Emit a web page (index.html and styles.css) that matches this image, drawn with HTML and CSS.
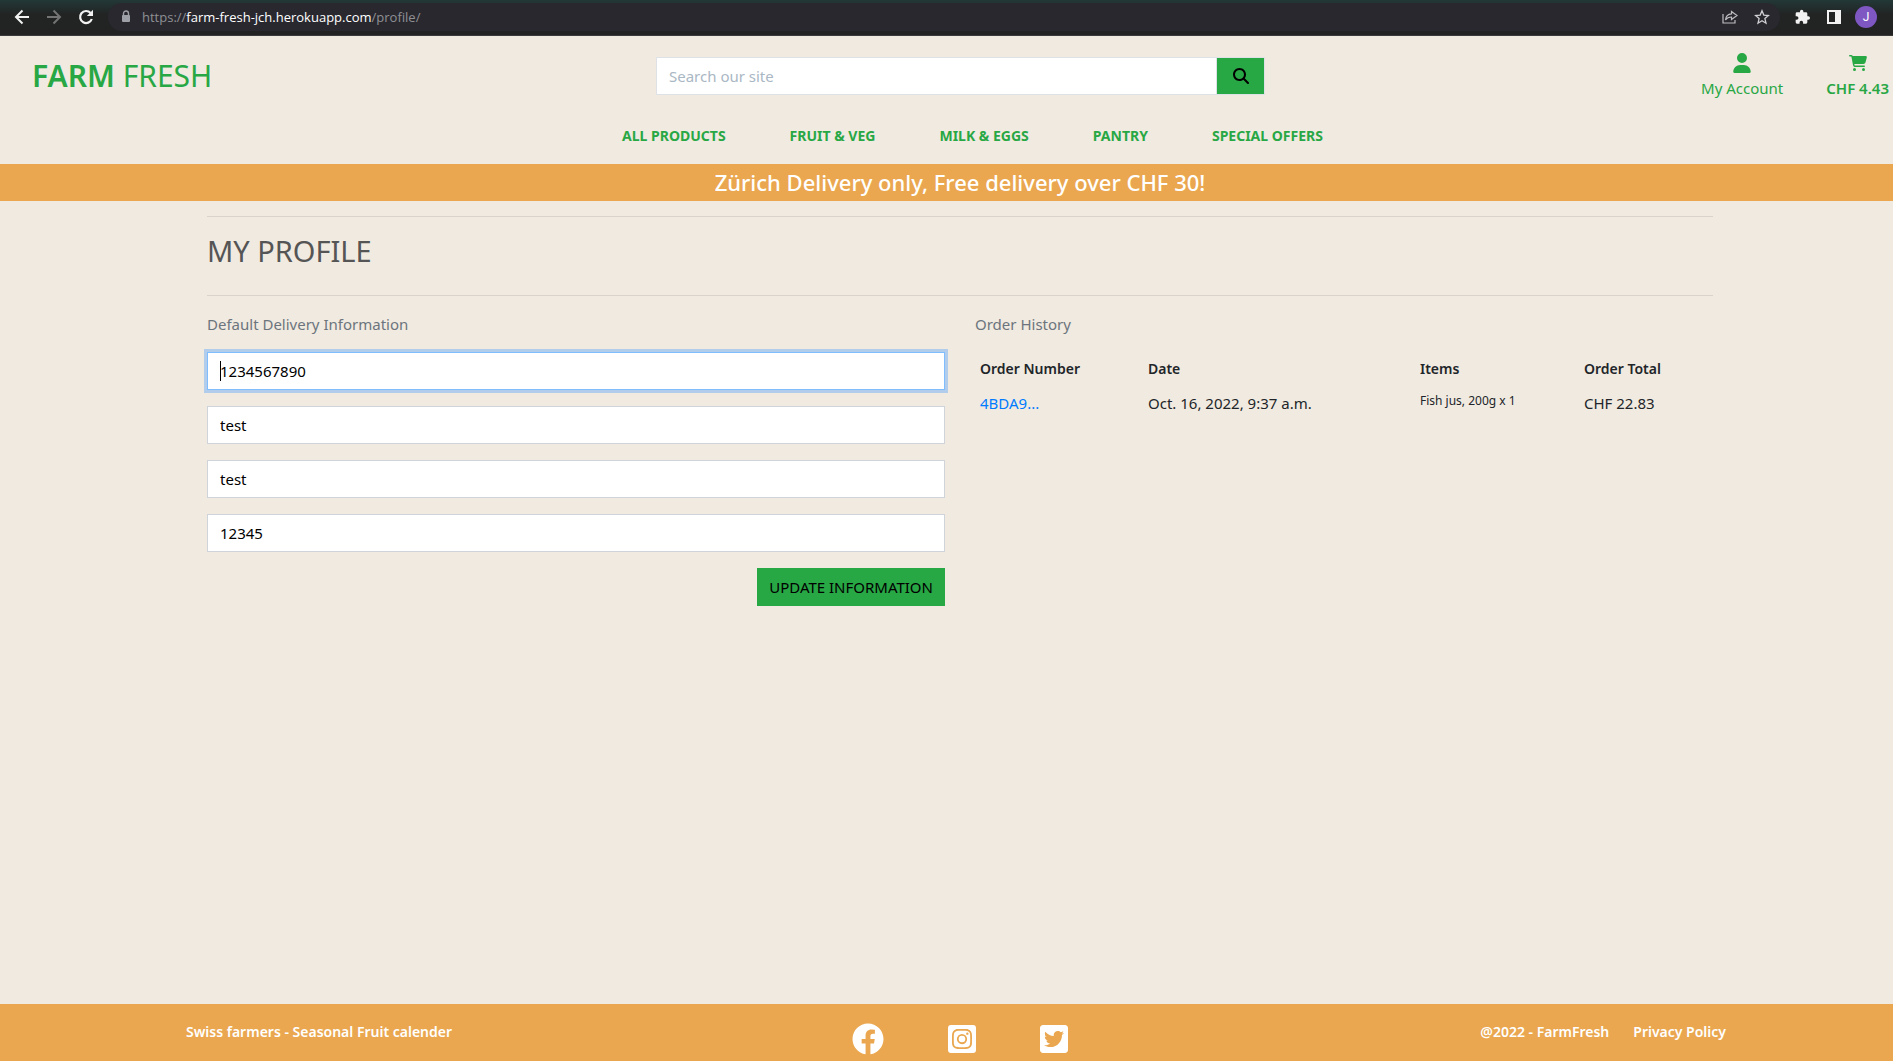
FILE: index.html
```html
<!DOCTYPE html>
<html lang="en">
<head>
<meta charset="utf-8">
<meta name="viewport" content="width=device-width, initial-scale=1">
<title>Farm Fresh - My Profile</title>
<link rel="stylesheet" href="styles.css">
</head>
<body>
<div class="browser">
  <button class="tool" type="button" aria-label="Back"><svg width="16" height="16" viewBox="0 0 16 16" fill="none" stroke="#f2f2f2" stroke-width="2"><path d="M15 8H2M8.500 1.500 2 8l6.500 6.500"/></svg></button>
  <button class="tool" type="button" aria-label="Forward"><svg width="16" height="16" viewBox="0 0 16 16" fill="none" stroke="#747474" stroke-width="2"><path d="M1 8h13M7.500 1.500 14 8l-6.500 6.500"/></svg></button>
  <button class="tool" type="button" aria-label="Reload"><svg width="16" height="16" viewBox="0 0 16 16"><path d="M12.600 4A6 6 0 1 0 13.800 10" fill="none" stroke="#f2f2f2" stroke-width="2.200"/><path d="M15 .8V7H8.800z" fill="#f2f2f2"/></svg></button>
  <div class="address">
    <svg class="lock" width="10" height="14" viewBox="0 0 10 14"><path d="M2.500 6V3.500a2.500 2.500 0 0 1 5 0V6" fill="none" stroke="#9da0a6" stroke-width="1.400"/><rect x="1" y="5" width="8" height="7" rx="1" fill="#9da0a6"/></svg>
    <span class="url">https://<span class="host">farm-fresh-jch.herokuapp.com</span>/profile/</span>
    <button class="tool" type="button" aria-label="Share"><svg width="16" height="16" viewBox="0 0 16 16" fill="none" stroke="#bdbdc0" stroke-width="1.200"><path d="M1 5v9h12v-3M9.500 2.500 15 6.500l-5.500 4V8C6.500 8 4.800 9 3.500 11 3.800 7.500 6 5.200 9.500 4.900z"/></svg></button>
    <button class="tool" type="button" aria-label="Bookmark"><svg width="16" height="16" viewBox="0 0 16 16" fill="none" stroke="#d0d0d3" stroke-width="1.300"><path d="m8 1.800 1.800 4.300 4.700.4-3.600 3.100 1.100 4.600L8 11.700l-4 2.500 1.100-4.600L1.500 6.500l4.700-.4z"/></svg></button>
  </div>
  <button class="tool" type="button" aria-label="Extensions"><svg width="16" height="16" viewBox="0 0 24 24" fill="#f2f2f2"><path d="M21.500 11H20V7a2 2 0 0 0-2-2h-4V3.500a2.500 2.500 0 0 0-5 0V5H4.500a2 2 0 0 0-2 2v3.800H4a2.700 2.700 0 0 1 0 5.400H2.500V20a2 2 0 0 0 2 2h3.800v-1.500a2.700 2.700 0 0 1 5.400 0V22H18a2 2 0 0 0 2-2v-4h1.500a2.500 2.500 0 0 0 0-5z"/></svg></button>
  <button class="tool" type="button" aria-label="Side panel"><svg width="16" height="16" viewBox="0 0 16 16"><path d="M1 1h14v14H1zM3 3v10h6V3z" fill="#f2f2f2" fill-rule="evenodd"/></svg></button>
  <button class="avatar" type="button">J</button>
</div>

<header class="header">
  <div class="topbar">
    <a class="logo" href="#"><strong>FARM</strong> FRESH</a>
    <form class="search">
      <input class="search-box" type="text" aria-label="Search our site" placeholder="Search our site">
      <button class="search-btn" type="button" aria-label="Search"><svg width="16" height="16" viewBox="0 0 512 512"><path d="M416 208c0 45.900-14.900 88.300-40 122.700L502.600 457.400c12.500 12.500 12.500 32.800 0 45.300s-32.800 12.500-45.300 0L330.700 376c-34.400 25.200-76.800 40-122.700 40C93.100 416 0 322.900 0 208S93.100 0 208 0S416 93.100 416 208zM208 352a144 144 0 1 0 0-288 144 144 0 1 0 0 288z"/></svg></button>
    </form>
    <div class="account">
      <a class="account-link" href="#"><svg width="18" height="20" viewBox="0 0 448 512" fill="currentColor"><path d="M224 256A128 128 0 1 0 224 0a128 128 0 1 0 0 256zm-45.700 48C79.800 304 0 383.800 0 482.300 0 498.700 13.300 512 29.700 512H418.300c16.400 0 29.700-13.300 29.700-29.700 0-98.500-79.800-178.300-178.300-178.300z"/></svg>My Account</a>
      <a class="account-link total" href="#"><svg width="18" height="20" viewBox="0 0 576 512" fill="currentColor"><path d="M0 24C0 10.700 10.700 0 24 0H69.500c22 0 41.500 12.800 50.600 32h411c26.300 0 45.500 25 38.600 50.400l-41 152.300c-8.500 31.400-37 53.300-69.500 53.300H170.700l5.400 28.500c2.200 11.300 12.100 19.500 23.600 19.500H488c13.300 0 24 10.700 24 24s-10.700 24-24 24H199.700c-34.600 0-64.300-24.600-70.700-58.500L77.400 54.500c-.7-3.800-4-6.500-7.900-6.500H24C10.700 48 0 37.300 0 24zM128 464a48 48 0 1 1 96 0 48 48 0 1 1-96 0zm336-48a48 48 0 1 1 0 96 48 48 0 1 1 0-96z"/></svg>CHF 4.43</a>
    </div>
  </div>
  <nav class="nav">
    <a href="#">ALL PRODUCTS</a>
    <a href="#">FRUIT &amp; VEG</a>
    <a href="#">MILK &amp; EGGS</a>
    <a href="#">PANTRY</a>
    <a href="#">SPECIAL OFFERS</a>
  </nav>
</header>

<p class="banner">Zürich Delivery only, Free delivery over CHF 30!</p>

<main class="main">
  <h1 class="title">MY PROFILE</h1>
  <div class="columns">
    <section>
      <h2 class="subtitle">Default Delivery Information</h2>
      <form class="form">
        <div class="field active"><input type="text" aria-label="Phone number" value="1234567890"></div>
        <div class="field"><input type="text" aria-label="Street address" value="test"></div>
        <div class="field"><input type="text" aria-label="Town or city" value="test"></div>
        <div class="field"><input type="text" aria-label="Postal code" value="12345"></div>
        <button class="update" type="button">UPDATE INFORMATION</button>
      </form>
    </section>
    <section>
      <h2 class="subtitle">Order History</h2>
      <table class="orders">
        <thead><tr><th class="c-number">Order Number</th><th class="c-date">Date</th><th class="c-items">Items</th><th>Order Total</th></tr></thead>
        <tbody><tr><td><a href="#">4BDA9...</a></td><td>Oct. 16, 2022, 9:37 a.m.</td><td class="items">Fish jus, 200g x 1</td><td>CHF 22.83</td></tr></tbody>
      </table>
    </section>
  </div>
</main>

<footer class="footer">
  <a href="#">Swiss farmers - Seasonal Fruit calender</a>
  <div class="social">
    <a href="#" aria-label="Facebook"><svg width="32" height="32" viewBox="0 0 512 512" fill="currentColor"><path d="M504 256C504 119 393 8 256 8S8 119 8 256c0 123.780 90.690 226.380 209.250 245V327.690h-63V256h63v-54.640c0-62.150 37-96.480 93.670-96.480 27.140 0 55.520 4.840 55.520 4.840v61h-31.280c-30.800 0-40.410 19.120-40.410 38.730V256h68.780l-11 71.690h-57.780V501C413.310 482.380 504 379.780 504 256z"/></svg></a>
    <a href="#" aria-label="Instagram"><svg width="28" height="32" viewBox="0 0 448 512" fill="currentColor"><path d="M224 202.660A53.340 53.340 0 1 0 277.360 256 53.380 53.380 0 0 0 224 202.660zm124.710-41a54 54 0 0 0-30.410-30.410c-21-8.290-71-6.430-94.300-6.430s-73.250-1.930-94.310 6.430a54 54 0 0 0-30.410 30.410c-8.280 21-6.430 71.050-6.430 94.330s-1.850 73.270 6.470 94.340a54 54 0 0 0 30.410 30.410c21 8.290 71 6.430 94.310 6.430s73.240 1.930 94.300-6.430a54 54 0 0 0 30.410-30.410c8.350-21 6.430-71.050 6.430-94.330s1.920-73.260-6.430-94.330zM224 338a82 82 0 1 1 82-82 81.900 81.900 0 0 1-82 82zm85.380-148.300a19.140 19.140 0 1 1 19.130-19.140 19.100 19.100 0 0 1-19.090 19.180zM400 32H48A48 48 0 0 0 0 80v352a48 48 0 0 0 48 48h352a48 48 0 0 0 48-48V80a48 48 0 0 0-48-48zm-17.120 290c-1.290 25.630-7.140 48.340-25.850 67s-41.400 24.630-67 25.850c-26.410 1.490-105.590 1.490-132 0-25.630-1.290-48.260-7.150-67-25.850s-24.630-41.420-25.850-67c-1.490-26.420-1.490-105.610 0-132 1.290-25.630 7.070-48.340 25.850-67s41.470-24.560 67-25.780c26.410-1.490 105.590-1.490 132 0 25.630 1.290 48.330 7.150 67 25.850s24.630 41.420 25.850 67.050c1.490 26.320 1.490 105.440 0 131.880z"/></svg></a>
    <a href="#" aria-label="Twitter"><svg width="28" height="32" viewBox="0 0 448 512" fill="currentColor"><path d="M400 32H48C21.500 32 0 53.500 0 80v352c0 26.500 21.500 48 48 48h352c26.500 0 48-21.500 48-48V80c0-26.500-21.500-48-48-48zm-48.900 158.800c.2 2.800.2 5.700.2 8.500 0 86.700-66 186.600-186.600 186.600-37.200 0-71.700-10.800-100.700-29.400 5.300.6 10.400.8 15.800.8 30.700 0 58.900-10.400 81.400-28-28.800-.6-53-19.500-61.300-45.500 10.100 1.500 19.200 1.500 29.600-1.200-30-6.100-52.500-32.500-52.500-64.400v-.8c8.700 4.900 18.900 7.900 29.600 8.300a65.447 65.447 0 0 1-29.200-54.600c0-12.200 3.200-23.400 8.900-33.100 32.300 39.800 80.800 65.800 135.200 68.600-9.300-44.500 24-80.600 64-80.600 18.900 0 35.900 7.900 47.900 20.700 14.800-2.800 29-8.300 41.600-15.800-4.900 15.200-15.200 28-28.800 36.100 13.200-1.400 26-5.100 37.800-10.200-8.900 13.100-20.100 24.700-32.900 34z"/></svg></a>
  </div>
  <div class="legal"><a href="#">@2022 - FarmFresh</a><a href="#">Privacy Policy</a></div>
</footer>
</body>
</html>
```
FILE: styles.css
```css
*, *::before { box-sizing: border-box; }

body {
  margin: 0;
  min-height: 100vh;
  display: flex;
  flex-direction: column;
  background: #f1eae0;
  color: #212529;
  font: 15px/24px "Noto Sans", "Open Sans", sans-serif;
}

h1, h2, p { margin: 0; }
svg { display: block; flex: none; }
a { color: inherit; text-decoration: none; }
button { border: 0; padding: 0; background: none; font: inherit; }

/* Browser toolbar */
.browser {
  display: flex;
  align-items: center;
  gap: 16px;
  height: 36px;
  padding: 0 16px 2px 14px;
  background: linear-gradient(#223837, #222424 14px, #222);
  border-bottom: 1px solid #3a3a3a;
}
.tool { display: flex; }
.address {
  flex: 1;
  display: flex;
  align-items: center;
  gap: 16px;
  height: 28px;
  margin: 0 -2px;
  padding: 0 10px 0 13px;
  border-radius: 14px;
  background: #29282f;
}
.lock { margin-right: -5px; }
.url { flex: 1; color: #8f9094; font: 13px/20px "Open Sans", sans-serif; }
.host { color: #fff; }
.avatar {
  width: 22px;
  height: 22px;
  margin-left: -3px;
  border-radius: 50%;
  background: #7e57c2;
  color: #fff;
  font: 12px/22px Roboto, sans-serif;
}

/* Site header */
.header { color: #28a745; }
.topbar {
  display: grid;
  grid-template-columns: 208fr 203fr 208fr;
  align-items: center;
  height: 80px;
  padding: 0 4px 0 32px;
}
.logo { font-size: 30px; line-height: 40px; }
.logo strong { font-weight: 600; }
.search { display: flex; height: 38px; }
.search-box {
  flex: 1;
  min-width: 0;
  padding: 0 12px;
  border: 1px solid #dee2e6;
  background: #fff;
  font: inherit;
}
.search-box::placeholder { color: #aab7c4; }
.search-btn {
  display: flex;
  align-items: center;
  justify-content: center;
  width: 48px;
  border: 1px solid #dee2e6;
  border-left: 0;
  background: #28a745;
}
.account { display: flex; justify-content: flex-end; gap: 43px; }
.account-link {
  display: flex;
  flex-direction: column;
  align-items: center;
  gap: 3px;
}
.total { font-weight: 600; }
.nav {
  display: flex;
  justify-content: center;
  gap: 64px;
  height: 48px;
  padding: 8px 0 0 52px;
  font-size: 14px;
  font-weight: 700;
}

.banner {
  background: #eaa74f;
  color: #fff;
  font-size: 22px;
  line-height: 37px;
  font-weight: 500;
  text-align: center;
  padding-left: 27px;
}

/* Profile */
.main { padding: 15px 180px 40px 207px; }
.title {
  height: 80px;
  padding-top: 14px;
  border: solid #dad3cb;
  border-width: 1px 0;
  color: #555;
  font-size: 29px;
  line-height: 40px;
  font-weight: 400;
}
.columns { display: grid; grid-template-columns: 1fr 1fr; gap: 30px; padding-top: 16px; }
.subtitle { color: #6c757d; font-size: 15px; line-height: 24px; font-weight: 400; }
.form { display: flex; flex-direction: column; gap: 16px; padding-top: 16px; }
.field { position: relative; display: flex; }
.field input {
  flex: 1;
  height: 38px;
  padding: 0 12px;
  border: 1px solid #ced4da;
  background: #fff;
  color: #000;
  font: inherit;
}
.active input { border-color: #80bdff; box-shadow: 0 0 0 3px #b2cdeb; }
.active::before {
  content: "";
  position: absolute;
  left: 13px;
  top: 9px;
  width: 1px;
  height: 20px;
  background: #000;
}
.update {
  align-self: flex-end;
  height: 38px;
  padding: 0 12px;
  background: #28a745;
  color: #000;
}
.orders { width: 100%; margin-top: 16px; border-collapse: collapse; table-layout: fixed; }
.orders th, .orders td { padding: 5px; text-align: left; vertical-align: top; }
.orders th { font-size: 14px; font-weight: 600; }
.orders a { color: #007bff; }
.orders .items { font-size: 12px; line-height: 20px; }
.c-number { width: 168px; }
.c-date { width: 272px; }
.c-items { width: 164px; }

/* Footer */
.footer {
  display: grid;
  grid-template-columns: 1fr auto 1fr;
  min-height: 57px;
  margin-top: auto;
  padding: 16px 167px 6px 186px;
  background: #eaa74f;
  color: #fff;
  font-size: 14px;
  font-weight: 600;
}
.social { display: flex; gap: 64px; padding: 3px 0 0 8px; }
.legal { display: flex; justify-content: flex-end; gap: 24px; }
```
